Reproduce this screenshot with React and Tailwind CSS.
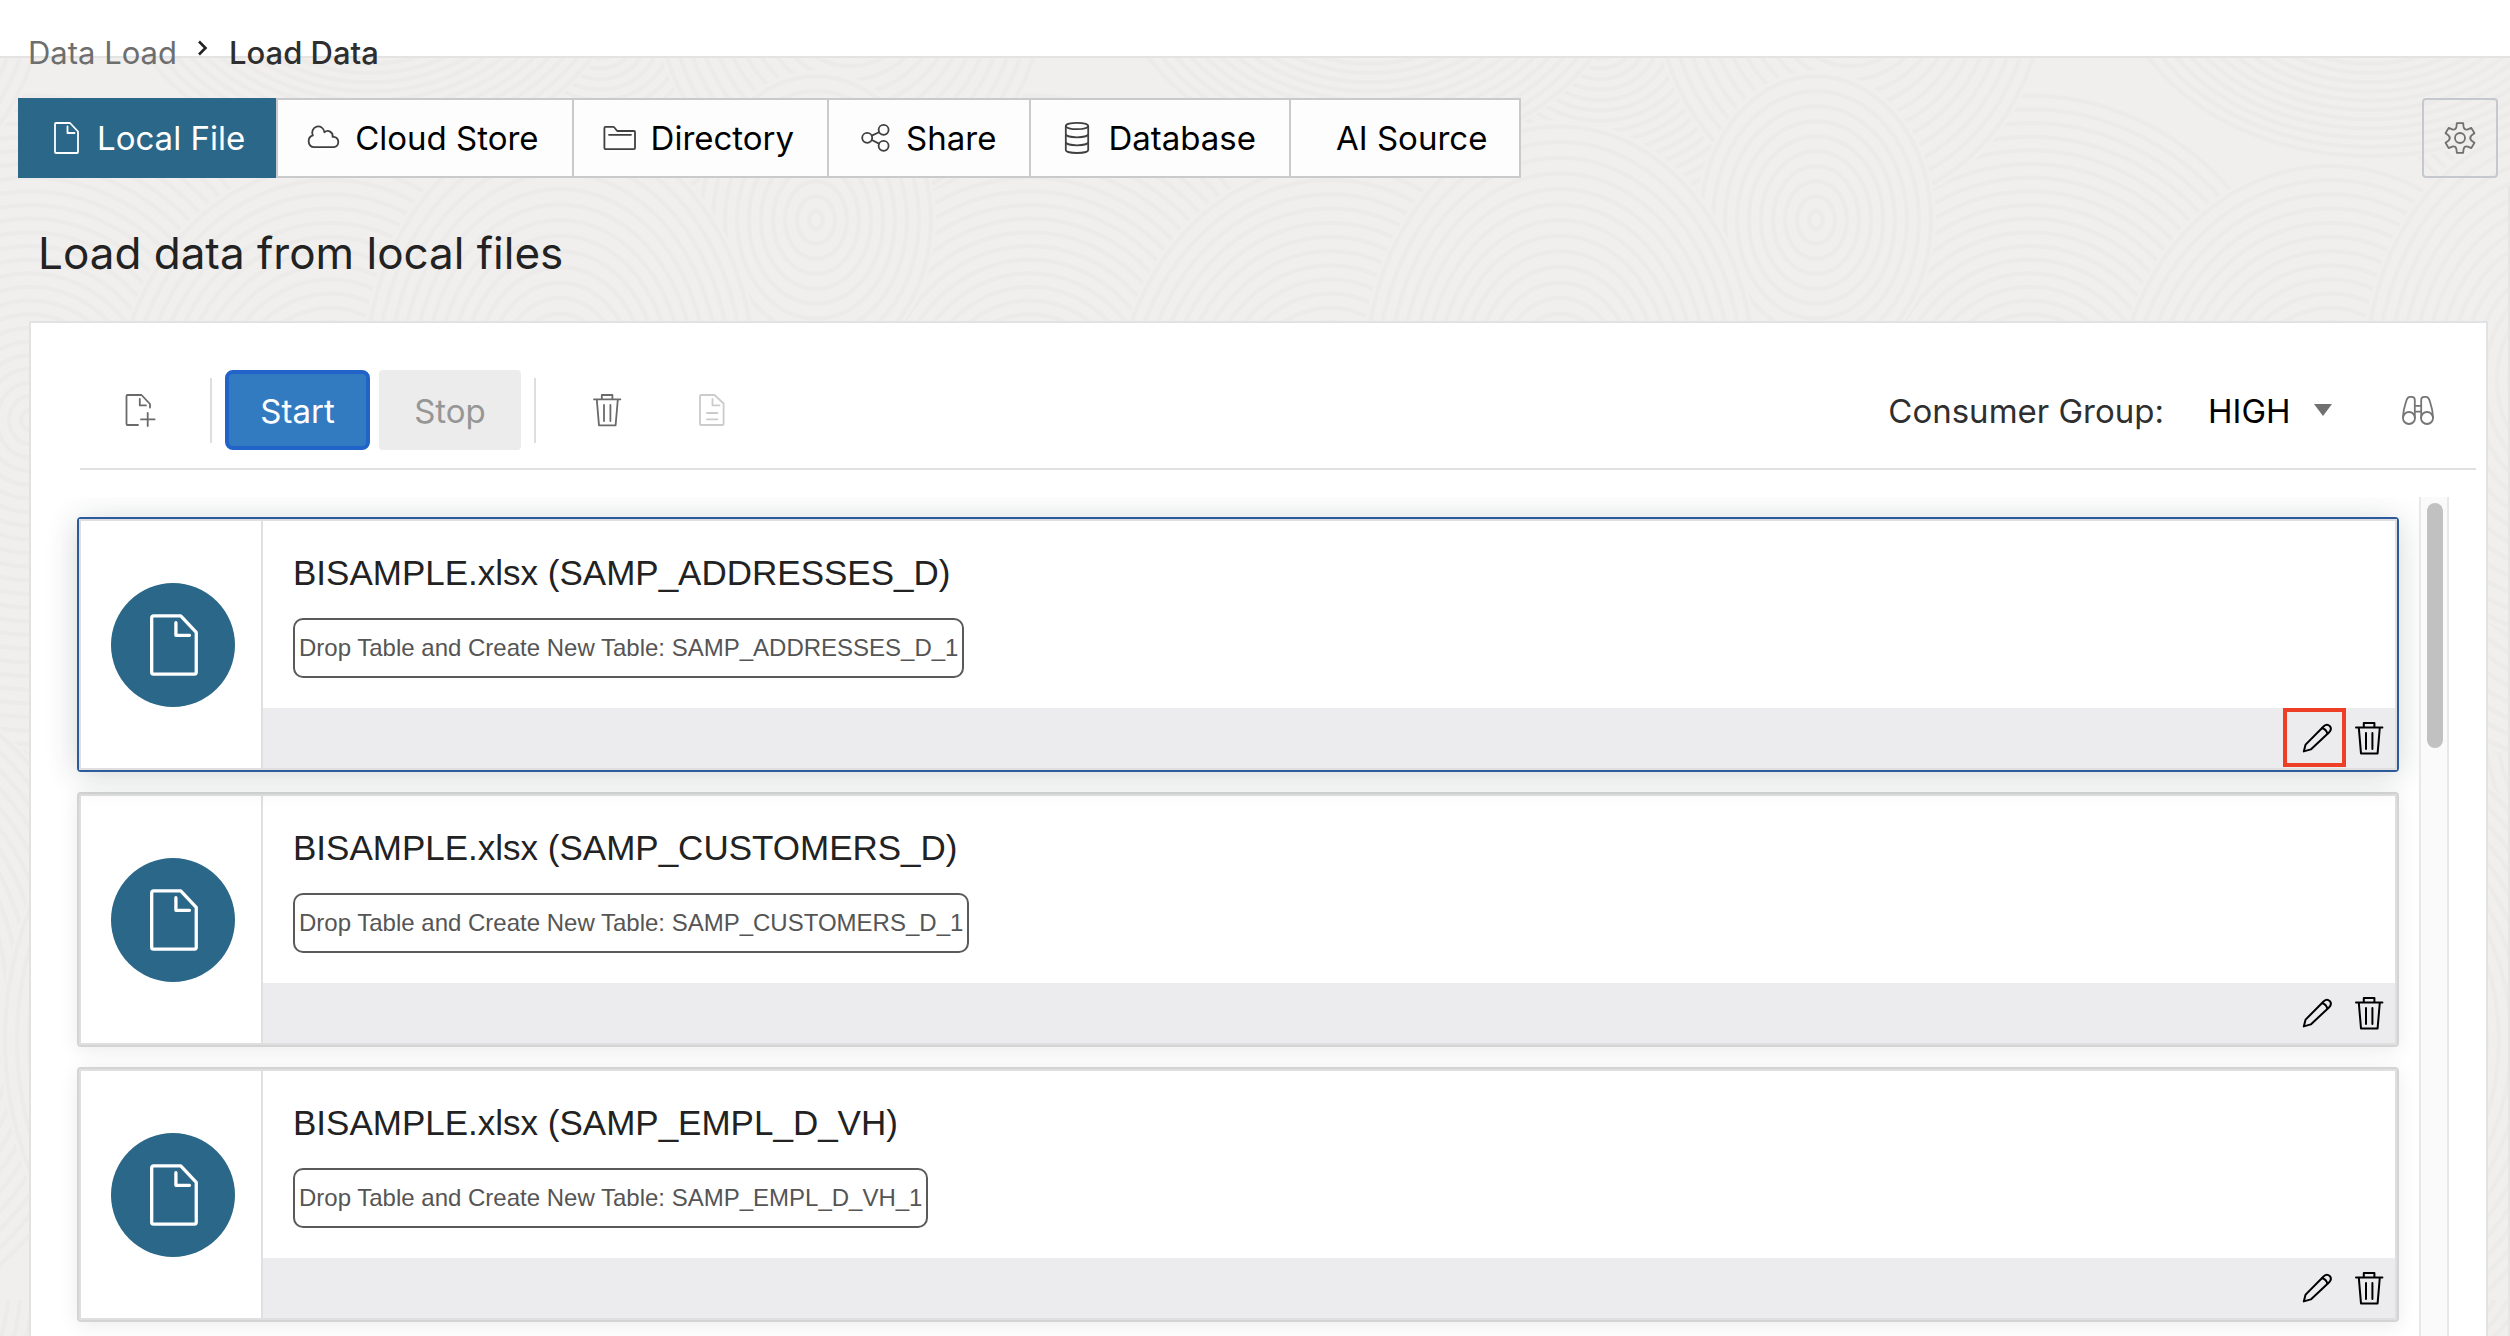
import React from 'react';

const Icon = ({ children, className = 'size-8', width = 1.8 }) => (
  <svg
    viewBox="0 0 32 32"
    className={`shrink-0 overflow-visible ${className}`}
    fill="none"
    stroke="currentColor"
    strokeWidth={width}
    strokeLinecap="round"
    strokeLinejoin="round"
    aria-hidden="true"
  >
    {children}
  </svg>
);

const FileIcon = (props) => (
  <Icon {...props}>
    <path d="M6 1H20L28 9.5V30Q28 31 27 31H6Q5 31 5 30V2Q5 1 6 1Z" />
    <path d="M17.5 4.5V11H24.5" />
  </Icon>
);

const CloudIcon = () => (
  <Icon>
    <path d="M5.6 25.2H26A5.3 5.3 0 0 0 26 14.8H24.6A5 5 0 0 0 16.4 10.2A6.1 6.1 0 1 0 4.9 13.4A6.1 6.1 0 0 0 5.6 25.2Z" />
  </Icon>
);

const FolderIcon = () => (
  <Icon>
    <path d="M1.6 4.8H9Q9.8 4.8 10.4 5.5L13.2 9H30Q31 9 31 10V26Q31 27.2 30 27.2H1.4Q.4 27.2 .4 26V6Q.4 4.8 1.6 4.8Z" />
    <path d="M5 12.8H27" />
  </Icon>
);

const ShareIcon = () => (
  <Icon>
    <circle cx="8.2" cy="15.8" r="5" />
    <circle cx="24.6" cy="7.8" r="5" />
    <circle cx="24.6" cy="23.8" r="5" />
    <path d="M12.8 13.6L20 10.2M12.8 18L20 21.6" />
  </Icon>
);

const DatabaseIcon = () => (
  <Icon>
    <ellipse cx="16" cy="4" rx="11.2" ry="3.2" />
    <path d="M4.8 4V28C4.8 32 27.2 32 27.2 28V4M4.8 12C4.8 16.4 27.2 16.4 27.2 12M4.8 20C4.8 24.4 27.2 24.4 27.2 20" />
  </Icon>
);

const point = (deg, r) => {
  const a = (deg * Math.PI) / 180;
  return `${(16 + r * Math.sin(a)).toFixed(2)} ${(16 - r * Math.cos(a)).toFixed(2)}`;
};

const gearPath =
  [0, 60, 120, 180, 240, 300]
    .map(
      (t) =>
        `${t === 0 ? 'M' : 'L'}${point(t - 12, 15.2)}L${point(t + 12, 15.2)}L${point(t + 18, 11.6)}Q${point(t + 30, 9)} ${point(t + 42, 11.6)}`
    )
    .join('') + 'Z';

const GearIcon = () => (
  <Icon>
    <path d={gearPath} />
    <circle cx="16" cy="16" r="5" />
  </Icon>
);

const FilePlusIcon = () => (
  <Icon>
    <path d="M14 31H3.5Q2.5 31 2.5 30V2Q2.5 1 3.5 1H17.5L26 10V13.5" />
    <path d="M15.8 5V11.4H22M23.7 18.8V32M17 25.4H30.6" />
  </Icon>
);

const FileTextIcon = () => (
  <Icon>
    <path d="M5 1H18.5L27.6 9.5V30Q27.6 31 26.6 31H5Q4 31 4 30V2Q4 1 5 1Z" />
    <path d="M16.5 5V11.4H23.5M11 19H21.5M11 25.4H21.5" />
  </Icon>
);

const TrashIcon = (props) => (
  <Icon {...props}>
    <path d="M3 5.4H29.4M10.8 5V1H21.4V5M5.8 5.6L8 31.4H24.6L26.8 5.6M13 11V27M19.4 11V27" />
  </Icon>
);

const PencilIcon = () => (
  <Icon width={2}>
    <path d="M2.8 29.4L4.6 22.6L22.8 4.2Q26 1.4 28.9 4.2Q31.2 7.2 28.2 10.2L9.8 27.4Z" />
    <path d="M21 6.2Q25 6.8 26.4 11.6" />
  </Icon>
);

const BinocularsIcon = () => (
  <Icon>
    <circle cx="7" cy="24" r="6" />
    <circle cx="25" cy="24" r="6" />
    <path d="M1 23.5C1 15 3.4 10 4.6 6Q5.6 2.8 8 2.8H9.6Q12.8 2.8 12.8 6V24M31 23.5C31 15 28.6 10 27.4 6Q26.4 2.8 24 2.8H22.4Q19.2 2.8 19.2 6V24M12.8 11.8H19.2M12.8 17.6H19.2" />
  </Icon>
);

/* Faint fingerprint-like texture: overlapping ovals of concentric rings (x, y, rx, ry). */
const ovals = [
  [600, 40, 230, 200],
  [120, 640, 330, 400],
  [640, 700, 320, 420],
  [580, 470, 240, 300],
  [370, -40, 260, 200],
  [30, 420, 290, 330],
  [850, -20, 200, 230],
  [330, 420, 220, 260],
  [816, 220, 120, 150],
  [560, 380, 200, 260],
  [820, 1000, 300, 340],
  [300, 1040, 300, 330],
];

const Texture = () => (
  <svg className="absolute inset-0 -z-10 h-full w-full" aria-hidden="true">
    <defs>
      <pattern id="rings" width="1000" height="1300" patternUnits="userSpaceOnUse">
        <rect width="1000" height="1300" fill="#f0efed" />
        {ovals.map(([x, y, rx, ry]) =>
          [x - 1000, x, x + 1000].map((cx) => (
            <g key={`${cx}-${y}`} fill="none" stroke="#ecebe9" strokeWidth="4">
              <ellipse cx={cx} cy={y} rx={rx} ry={ry} fill="#f0efed" stroke="none" />
              {Array.from({ length: Math.floor(rx / 12) }, (_, i) => (
                <ellipse key={i} cx={cx} cy={y} rx={rx - 5 - i * 12} ry={((rx - 5 - i * 12) * ry) / rx} />
              ))}
            </g>
          ))
        )}
      </pattern>
    </defs>
    <rect width="100%" height="100%" fill="url(#rings)" />
  </svg>
);

const tabs = [
  { label: 'Cloud Store', icon: <CloudIcon /> },
  { label: 'Directory', icon: <FolderIcon /> },
  { label: 'Share', icon: <ShareIcon /> },
  { label: 'Database', icon: <DatabaseIcon /> },
  { label: 'AI Source', icon: null },
];

const files = [
  { table: 'SAMP_ADDRESSES_D', selected: true },
  { table: 'SAMP_CUSTOMERS_D' },
  { table: 'SAMP_EMPL_D_VH' },
];

const FileCard = ({ table, selected }) => (
  <li
    className={
      selected
        ? 'relative z-10 shrink-0 rounded-sm border-2 border-[#2c5a9c] shadow-[0_4px_32px_rgba(30,45,40,0.2)]'
        : 'shrink-0 rounded-sm border-2 border-[#d3d4d4] shadow-[0_4px_20px_rgba(0,0,0,0.08)]'
    }
  >
    <article className="flex border-2 border-[#dfdfe0] bg-white">
      <div className="flex w-[182px] shrink-0 items-center border-r-2 border-[#e0e0e0] pl-[30px]">
        <span className="flex size-[124px] items-center justify-center rounded-full bg-[#2b6788] text-white">
          <FileIcon className="size-[62px]" width={1.7} />
        </span>
      </div>
      <div className="min-w-0 flex-1">
        <div className="pt-[28px] pb-[30px] pl-[30px]">
          <h2 className="text-[35px] leading-[48px] text-[#222]">BISAMPLE.xlsx ({table})</h2>
          <p className="mt-[21px] flex h-[60px] w-fit items-center rounded-[10px] border-2 border-[#5a5a5a] px-1 text-[24px] text-[#555]">
            Drop Table and Create New Table: {table}_1
          </p>
        </div>
        <div className="flex h-[60px] items-center justify-end gap-5 bg-[#ececee] pr-[10px] text-black">
          <button type="button" aria-label={`Edit ${table}`} className="relative">
            <PencilIcon />
            {selected && <span className="absolute -top-[14px] -right-[13px] -bottom-[13px] -left-[18px] border-4 border-[#ee3f26]" />}
          </button>
          <button type="button" aria-label={`Delete ${table}`}>
            <TrashIcon width={2} />
          </button>
        </div>
      </div>
    </article>
  </li>
);

export default function App() {
  return (
    <div className="relative isolate flex h-screen flex-col overflow-hidden font-['Inter',sans-serif]">
      <Texture />
      <header className="h-[58px] shrink-0 border-b-2 border-[#e3e3e3] bg-white pt-[33px] pl-7">
        <nav aria-label="Breadcrumb" className="flex text-[31px] leading-10">
          <a href="#data-load" className="text-[#6e6e6e]">Data Load</a>
          <svg viewBox="0 0 12 16" className="mx-5 mt-[7px] h-4 w-3" fill="none" stroke="#222" strokeWidth="2.6" aria-hidden="true">
            <path d="M2 1.5L8.5 8L2 14.5" />
          </svg>
          <span aria-current="page" className="font-medium text-[#2e2e2e]">Load Data</span>
        </nav>
      </header>

      <main className="flex min-h-0 flex-1 flex-col pt-10">
        <div className="flex justify-between pr-3 pl-[18px]">
          <nav aria-label="Sources" className="flex text-[33px] leading-10">
            <button type="button" aria-current="true" className="flex h-20 items-center gap-[15px] bg-[#2b6788] pr-[31px] pl-8 text-white">
              <FileIcon />
              Local File
            </button>
            <div className="flex border-2 border-[#c8cacc] bg-[#fdfdfd]">
              {tabs.map(({ label, icon }) => (
                <button key={label} type="button" className="flex items-center gap-[15px] border-r-2 border-[#c8cacc] pr-[33px] pl-[30px] text-black last:border-r-0 last:pr-8">
                  <span className="flex text-[#404040]">{icon}</span>
                  {label}
                </button>
              ))}
            </div>
          </nav>
          <button type="button" aria-label="Settings" className="flex h-20 w-[76px] items-center justify-center rounded-sm border-2 border-[#c5c9cd] text-[#707070]">
            <GearIcon />
          </button>
        </div>

        <div className="mt-2 flex min-h-0 flex-1 flex-col border-r-2 border-[#e6e6e5] pt-[39px]">
          <h1 className="mb-10 pl-[38px] text-[44px] leading-[56px] text-[#222]">Load data from local files</h1>

          <section className="mr-5 ml-[29px] flex min-h-0 flex-1 flex-col border-2 border-b-0 border-[#e0e2e3] bg-white pt-[47px]">
            <div className="mr-[10px] ml-[49px] flex items-center justify-between border-b-2 border-[#e1e1e1] pb-[18px] text-[33px] leading-10">
              <div className="flex items-center pl-11 text-[#6a6a6a]">
                <button type="button" aria-label="Add file"><FilePlusIcon /></button>
                <span className="mr-[13px] ml-[54px] h-[65px] w-0.5 bg-[#dedede]" />
                <button type="button" className="h-20 w-[145px] rounded-lg border-4 border-[#2163c8] bg-[#337bc0] pt-0.5 text-white">Start</button>
                <button type="button" disabled className="ml-[9px] h-20 w-[142px] rounded bg-[#ececec] pt-0.5 text-[#969696]">Stop</button>
                <span className="mr-[55px] ml-[13px] h-[65px] w-0.5 bg-[#dedede]" />
                <button type="button" aria-label="Delete all"><TrashIcon /></button>
                <button type="button" disabled aria-label="View log" className="ml-[73px] text-[#cbcbcb]"><FileTextIcon /></button>
              </div>
              <div className="flex items-center pr-[42px]">
                <label htmlFor="group" className="mr-11 pt-0.5 text-[#2f2f2f]">Consumer Group:</label>
                <div className="relative flex items-center">
                  <select id="group" className="w-[124px] appearance-none bg-transparent pt-0.5 text-black">
                    <option>HIGH</option>
                    <option>MEDIUM</option>
                    <option>LOW</option>
                  </select>
                  <svg viewBox="0 0 18 12" className="pointer-events-none absolute right-0 h-3 w-[18px]" fill="#707070" aria-hidden="true">
                    <path d="M0 0H18L9 12Z" />
                  </svg>
                </div>
                <button type="button" aria-label="Search" className="ml-[70px] text-[#757575]"><BinocularsIcon /></button>
              </div>
            </div>

            <div className="mt-[27px] mr-[37px] flex min-h-0 flex-1">
              <ul className="flex min-w-0 flex-1 flex-col gap-5 overflow-hidden pt-5 pr-5 pl-[46px] font-['Liberation_Sans',Arial,sans-serif]">
                {files.map((file) => (
                  <FileCard key={file.table} {...file} />
                ))}
              </ul>
              <div className="w-[30px] shrink-0 border-x-2 border-[#e8e8e8] bg-[#fafafa] px-1.5 pt-1.5">
                <div className="h-[245px] w-4 rounded-full bg-[#c1c1c1]" />
              </div>
            </div>
          </section>
        </div>
      </main>
    </div>
  );
}
